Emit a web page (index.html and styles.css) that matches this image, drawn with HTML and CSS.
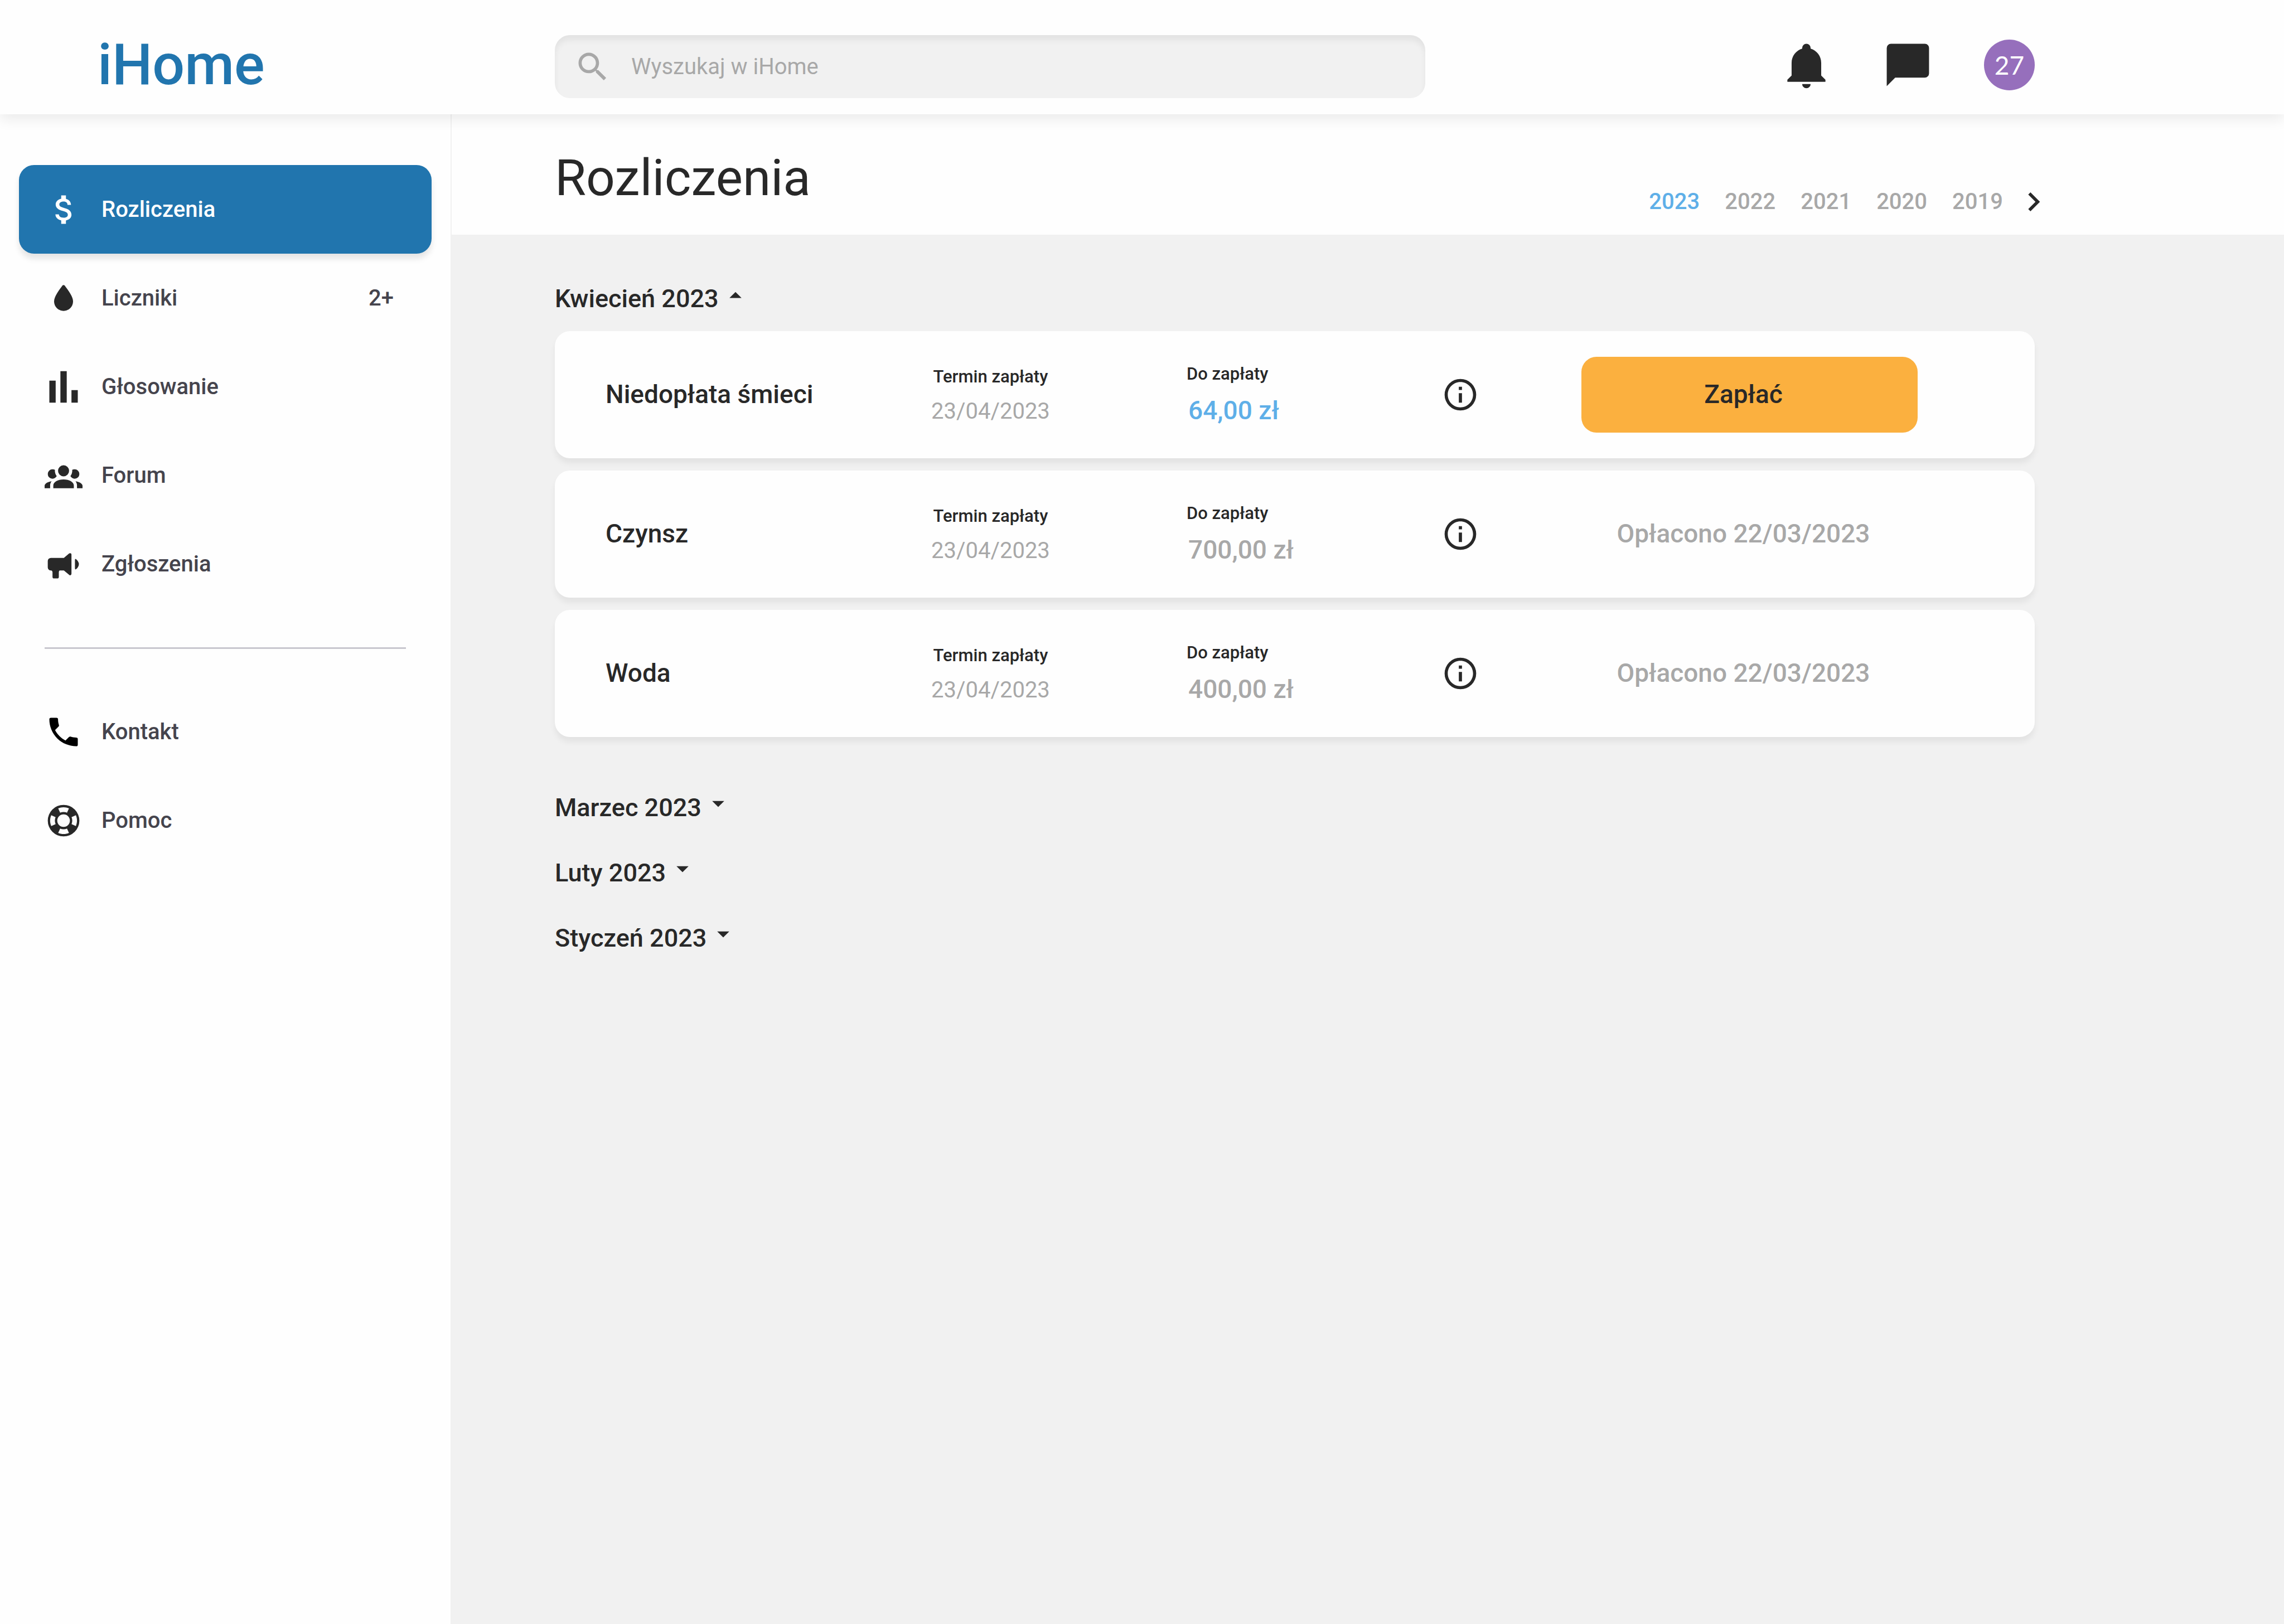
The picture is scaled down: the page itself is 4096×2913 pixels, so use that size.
FILE: index.html
```html
<!DOCTYPE html>
<html lang="pl">
<head>
<meta charset="utf-8">
<meta name="viewport" content="width=device-width, initial-scale=1">
<title>iHome – Rozliczenia</title>
<link rel="stylesheet" href="styles.css">
</head>
<body>
<svg class="sprite" aria-hidden="true">
  <symbol id="i-menu-up" viewBox="0 0 24 24"><path d="M7,15L12,10L17,15H7Z"/></symbol>
  <symbol id="i-menu-down" viewBox="0 0 24 24"><path d="M7,10L12,15L17,10H7Z"/></symbol>
  <symbol id="i-info" viewBox="0 0 24 24"><path d="M11,9H13V7H11M12,20C7.59,20 4,16.41 4,12C4,7.59 7.59,4 12,4C16.41,4 20,7.59 20,12C20,16.41 16.41,20 12,20M12,2A10,10 0 0,0 2,12A10,10 0 0,0 12,22A10,10 0 0,0 22,12A10,10 0 0,0 12,2M11,17H13V11H11V17Z"/></symbol>
</svg>

<header class="topbar">
  <a class="brand" href="#">iHome</a>
  <form class="search" role="search">
    <svg class="icon" viewBox="0 0 24 24" aria-hidden="true"><path d="M15.5 14h-.79l-.28-.27C15.41 12.59 16 11.11 16 9.5 16 5.91 13.09 3 9.5 3S3 5.91 3 9.5 5.91 16 9.5 16c1.61 0 3.09-.59 4.23-1.57l.27.28v.79l5 4.99L20.49 19l-4.99-5zm-6 0C7.01 14 5 11.99 5 9.5S7.01 5 9.5 5 14 7.01 14 9.5 11.99 14 9.5 14z"/></svg>
    <input class="search-input" type="search" placeholder="Wyszukaj w iHome" aria-label="Wyszukaj w iHome">
  </form>
  <div class="tools">
    <button class="tool" type="button" aria-label="Powiadomienia"><svg viewBox="0 0 24 24" aria-hidden="true"><path d="M21,19V20H3V19L5,17V11C5,7.9 7.03,5.17 10,4.29C10,4.19 10,4.1 10,4A2,2 0 0,1 12,2A2,2 0 0,1 14,4C14,4.1 14,4.19 14,4.29C16.97,5.17 19,7.9 19,11V17L21,19M14,21A2,2 0 0,1 12,23A2,2 0 0,1 10,21"/></svg></button>
    <button class="tool" type="button" aria-label="Wiadomości"><svg viewBox="0 0 24 24" aria-hidden="true"><path d="M20,2H4A2,2 0 0,0 2,4V22L6,18H20A2,2 0 0,0 22,16V4C22,2.89 21.1,2 20,2Z"/></svg></button>
    <button class="tool avatar" type="button">27</button>
  </div>
</header>

<div class="layout">
  <nav class="sidebar">
    <a class="nav-item active" href="#" aria-current="page">
      <svg class="icon" viewBox="0 0 24 24" aria-hidden="true"><path d="M12.3 10.9c-2.27-.59-3-1.2-3-2.15 0-1.09 1.01-1.85 2.7-1.85 1.78 0 2.44.85 2.5 2.1h2.21c-.07-1.72-1.12-3.3-3.21-3.81V3h-3v2.16c-1.94.42-3.5 1.68-3.5 3.61 0 2.31 1.91 3.46 4.7 4.13 2.5.6 3 1.48 3 2.41 0 .69-.49 1.79-2.7 1.79-2.06 0-2.87-.92-2.98-2.1h-2.2c.12 2.19 1.76 3.42 3.68 3.83V21h3v-2.15c1.95-.37 3.5-1.5 3.5-3.55 0-2.84-2.43-3.81-4.7-4.4z"/></svg>
      <span>Rozliczenia</span>
    </a>
    <a class="nav-item" href="#">
      <svg class="icon" viewBox="0 0 24 24" aria-hidden="true"><path d="M12,20A6,6 0 0,1 6,14C6,11.2 8.6,7.6 11.3,4Q12,3.3 12.7,4C15.4,7.6 18,11.2 18,14A6,6 0 0,1 12,20Z"/></svg>
      <span>Liczniki</span>
      <span class="badge">2+</span>
    </a>
    <a class="nav-item" href="#">
      <svg class="icon" viewBox="0 0 24 24" aria-hidden="true"><path d="M3,22V8H7V22H3M10,22V2H14V22H10M17,22V14H21V22H17Z"/></svg>
      <span>Głosowanie</span>
    </a>
    <a class="nav-item" href="#">
      <svg class="icon" viewBox="0 0 24 24" aria-hidden="true"><path d="M12,5.5A3.5,3.5 0 0,1 15.5,9A3.5,3.5 0 0,1 12,12.5A3.5,3.5 0 0,1 8.5,9A3.5,3.5 0 0,1 12,5.5M5,8C5.56,8 6.08,8.15 6.53,8.42C6.38,9.85 6.8,11.27 7.66,12.38C7.16,13.34 6.16,14 5,14A3,3 0 0,1 2,11A3,3 0 0,1 5,8M19,8A3,3 0 0,1 22,11A3,3 0 0,1 19,14C17.84,14 16.84,13.34 16.34,12.38C17.2,11.27 17.62,9.85 17.47,8.42C17.92,8.15 18.44,8 19,8M5.5,18.25C5.5,16.18 8.41,14.5 12,14.5C15.59,14.5 18.5,16.18 18.5,18.25V20H5.5V18.25M0,20V18.5C0,17.11 1.89,15.94 4.45,15.6C3.86,16.28 3.5,17.22 3.5,18.25V20H0M24,20H20.5V18.25C20.5,17.22 20.14,16.28 19.55,15.6C22.11,15.94 24,17.11 24,18.5V20Z"/></svg>
      <span>Forum</span>
    </a>
    <a class="nav-item" href="#">
      <svg class="icon" viewBox="0 0 24 24" aria-hidden="true"><path d="M4,8H12.2L15.5,5.2Q16.3,4.8 16.8,5.3Q17,5.5 17,6V18Q17,18.8 16.4,19Q15.9,19.1 15.5,18.7L12.2,16H9.5Q9,16.3 9,17V20A1,1 0 0,1 8,21H6A1,1 0 0,1 5,20V17Q5,16.3 4.3,16H4A2,2 0 0,1 2,14V10A2,2 0 0,1 4,8ZM19.9,8.8Q21.7,10.3 21.7,12T19.9,15.2Q19.2,15.6 19.2,14.6V9.4Q19.2,8.4 19.9,8.8Z"/></svg>
      <span>Zgłoszenia</span>
    </a>
    <hr class="divider">
    <a class="nav-item" href="#">
      <svg class="icon icon-black" viewBox="0 0 24 24" aria-hidden="true"><path d="M6.62,10.79C8.06,13.62 10.38,15.94 13.21,17.38L15.41,15.18C15.69,14.9 16.08,14.82 16.43,14.93C17.55,15.3 18.75,15.5 20,15.5A1,1 0 0,1 21,16.5V20A1,1 0 0,1 20,21A17,17 0 0,1 3,4A1,1 0 0,1 4,3H7.5A1,1 0 0,1 8.5,4C8.5,5.25 8.7,6.45 9.07,7.57C9.18,7.92 9.1,8.31 8.82,8.59L6.62,10.79Z"/></svg>
      <span>Kontakt</span>
    </a>
    <a class="nav-item" href="#">
      <svg class="icon" viewBox="0 0 24 24" aria-hidden="true"><path d="M19.79,15.41C20.74,13.24 20.74,10.75 19.79,8.59L17.05,9.83C17.65,11.21 17.65,12.78 17.06,14.17L19.79,15.41M15.42,4.21C13.25,3.26 10.76,3.26 8.59,4.21L9.83,6.94C11.22,6.35 12.79,6.35 14.18,6.95L15.42,4.21M4.21,8.58C3.26,10.76 3.26,13.24 4.21,15.42L6.95,14.17C6.35,12.79 6.35,11.21 6.95,9.82L4.21,8.58M8.59,19.79C10.76,20.74 13.25,20.74 15.42,19.78L14.18,17.05C12.8,17.65 11.22,17.65 9.84,17.06L8.59,19.79M12,2A10,10 0 0,1 22,12A10,10 0 0,1 12,22A10,10 0 0,1 2,12A10,10 0 0,1 12,2M12,8A4,4 0 0,0 8,12A4,4 0 0,0 12,16A4,4 0 0,0 16,12A4,4 0 0,0 12,8Z"/></svg>
      <span>Pomoc</span>
    </a>
  </nav>

  <main class="main">
    <div class="page-head">
      <h1 class="title">Rozliczenia</h1>
      <nav class="years" aria-label="Rok">
        <a class="year current" href="#" aria-current="true">2023</a>
        <a class="year" href="#">2022</a>
        <a class="year" href="#">2021</a>
        <a class="year" href="#">2020</a>
        <a class="year" href="#">2019</a>
        <button class="next" type="button" aria-label="Starsze lata"><svg class="icon" viewBox="0 0 24 24" aria-hidden="true"><path d="M8.59,16.58L13.17,12L8.59,7.41L10,6L16,12L10,18L8.59,16.58Z"/></svg></button>
      </nav>
    </div>

    <div class="content">
      <section class="open-month">
        <button class="month" type="button" aria-expanded="true">Kwiecień 2023<svg class="caret" aria-hidden="true"><use href="#i-menu-up"/></svg></button>
        <ul class="bills">
          <li class="bill">
            <h2 class="bill-name">Niedopłata śmieci</h2>
            <div class="due"><span class="label">Termin zapłaty</span><span class="date">23/04/2023</span></div>
            <div class="owed"><span class="label">Do zapłaty</span><span class="amount unpaid">64,00 zł</span></div>
            <button class="info" type="button" aria-label="Szczegóły"><svg class="icon" aria-hidden="true"><use href="#i-info"/></svg></button>
            <button class="pay" type="button">Zapłać</button>
          </li>
          <li class="bill">
            <h2 class="bill-name">Czynsz</h2>
            <div class="due"><span class="label">Termin zapłaty</span><span class="date">23/04/2023</span></div>
            <div class="owed"><span class="label">Do zapłaty</span><span class="amount">700,00 zł</span></div>
            <button class="info" type="button" aria-label="Szczegóły"><svg class="icon" aria-hidden="true"><use href="#i-info"/></svg></button>
            <p class="paid">Opłacono 22/03/2023</p>
          </li>
          <li class="bill">
            <h2 class="bill-name">Woda</h2>
            <div class="due"><span class="label">Termin zapłaty</span><span class="date">23/04/2023</span></div>
            <div class="owed"><span class="label">Do zapłaty</span><span class="amount">400,00 zł</span></div>
            <button class="info" type="button" aria-label="Szczegóły"><svg class="icon" aria-hidden="true"><use href="#i-info"/></svg></button>
            <p class="paid">Opłacono 22/03/2023</p>
          </li>
        </ul>
      </section>
      <div class="closed-months">
        <button class="month" type="button" aria-expanded="false">Marzec 2023<svg class="caret" aria-hidden="true"><use href="#i-menu-down"/></svg></button>
        <button class="month" type="button" aria-expanded="false">Luty 2023<svg class="caret" aria-hidden="true"><use href="#i-menu-down"/></svg></button>
        <button class="month" type="button" aria-expanded="false">Styczeń 2023<svg class="caret" aria-hidden="true"><use href="#i-menu-down"/></svg></button>
      </div>
    </div>
  </main>
</div>
</body>
</html>
```
FILE: styles.css
```css
:root {
  --ink: #282828;
  --muted: #a8a8a8;
  --blue: #2175ae;
  --sky: #5eafe8;
  --surface: #fefefe;
  --canvas: #f1f1f1;
  --radius: 27px;
}

* {
  box-sizing: border-box;
  margin: 0;
  padding: 0;
}

body {
  display: flex;
  flex-direction: column;
  min-height: 100vh;
  background: var(--surface);
  color: var(--ink);
  font-family: Roboto, "Liberation Sans", sans-serif;
  font-size: 40px;
}

a {
  color: inherit;
  text-decoration: none;
}

button {
  border: 0;
  background: none;
  color: inherit;
  font: inherit;
  cursor: pointer;
}

svg {
  display: block;
  fill: currentColor;
}

.sprite {
  display: none;
}

.icon {
  flex: none;
  width: 68px;
  height: 68px;
}

/* Top bar */
.topbar {
  position: relative;
  z-index: 1;
  display: flex;
  align-items: center;
  padding: 57px 447px 29px 175px;
  background: var(--surface);
  box-shadow: 0 9px 23px rgba(0, 0, 0, 0.08);
}

.brand {
  flex: none;
  width: 820px;
  color: var(--blue);
  font-size: 102px;
  font-weight: 500;
  line-height: 119px;
}

.search {
  display: flex;
  flex: 0 1 1561px;
  align-items: center;
  align-self: flex-end;
  gap: 35px;
  height: 113px;
  padding: 0 34px;
  border-radius: var(--radius);
  background: var(--canvas);
  box-shadow: inset 0 9px 11px rgba(0, 0, 0, 0.06);
  color: var(--muted);
}

.search-input {
  flex: 1;
  min-width: 0;
  border: 0;
  outline: 0;
  background: none;
  color: var(--ink);
  font: inherit;
}

.search-input::placeholder {
  color: var(--muted);
  opacity: 1;
}

.tools {
  display: flex;
  gap: 91px;
  margin-left: auto;
}

.tool {
  width: 91px;
  height: 91px;
}

.avatar {
  border-radius: 50%;
  background: #966fbc;
  color: #fff;
  font-family: Lato, Roboto, sans-serif;
  font-size: 46px;
}

/* Sidebar */
.layout {
  display: flex;
  flex: 1;
}

.sidebar {
  flex: none;
  width: 810px;
  padding: 91px 34px;
  border-right: 2px solid var(--canvas);
}

.nav-item {
  display: flex;
  align-items: center;
  gap: 34px;
  height: 159px;
  padding: 0 68px 0 46px;
  border-radius: var(--radius);
  color: #45444d;
  font-weight: 500;
}

.nav-item .icon {
  color: var(--ink);
}

.nav-item .icon-black {
  color: #000;
}

.nav-item.active {
  background: var(--blue);
  box-shadow: 0 9px 11px rgba(0, 0, 0, 0.1);
  color: #fff;
}

.nav-item.active .icon {
  color: #fff;
}

.badge {
  margin-left: auto;
}

.divider {
  height: 3px;
  margin: 70px 46px 69px;
  border: 0;
  background: #c8c7cf;
}

/* Page heading */
.main {
  flex: 1;
  min-width: 0;
  background: var(--canvas);
}

.page-head {
  display: flex;
  align-items: flex-end;
  justify-content: space-between;
  padding: 60px 415px 25px 185px;
  background: var(--surface);
}

.title {
  margin-bottom: 23px;
  font-size: 91px;
  font-weight: 400;
  line-height: 108px;
}

.years {
  display: flex;
  align-items: center;
  gap: 45px;
  color: var(--muted);
  font-weight: 500;
  line-height: 68px;
}

.year.current {
  color: var(--sky);
}

.next {
  margin-left: -24px;
  color: var(--ink);
}

/* Bills */
.content {
  padding: 81px 447px 81px 185px;
}

.month {
  display: flex;
  align-items: flex-start;
  gap: 4px;
  font-size: 45px;
  font-weight: 500;
  line-height: 68px;
}

.caret {
  width: 52px;
  height: 52px;
}

.bills {
  display: flex;
  flex-direction: column;
  gap: 22px;
  margin-top: 24px;
  list-style: none;
}

.bill {
  display: grid;
  grid-template-columns: 584fr 458fr 457fr 251fr 603fr;
  align-items: center;
  justify-items: start;
  height: 228px;
  padding: 0 210px 0 91px;
  border-radius: var(--radius);
  background: var(--surface);
  box-shadow: 0 9px 11px rgba(0, 0, 0, 0.06);
}

.bill-name {
  padding-bottom: 3px;
  font-size: 46px;
  font-weight: 500;
}

.due,
.owed {
  display: flex;
  flex-direction: column;
  gap: 20px;
}

.due {
  align-items: center;
  padding-top: 4px;
}

.label {
  font-size: 31px;
  font-weight: 500;
  line-height: 36px;
}

.date {
  color: var(--muted);
  line-height: 48px;
}

.amount {
  padding-left: 3px;
  color: var(--muted);
  font-size: 46px;
  font-weight: 500;
  line-height: 54px;
}

.amount.unpaid {
  color: var(--sky);
}

.pay,
.paid {
  width: 100%;
  padding: 0 22px 3px 0;
  font-size: 46px;
  font-weight: 500;
  text-align: center;
}

.pay {
  height: 136px;
  border-radius: var(--radius);
  background: #fbb03f;
}

.paid {
  color: var(--muted);
}

.closed-months {
  display: flex;
  flex-direction: column;
  align-items: flex-start;
  gap: 49px;
  margin-top: 93px;
}
```
